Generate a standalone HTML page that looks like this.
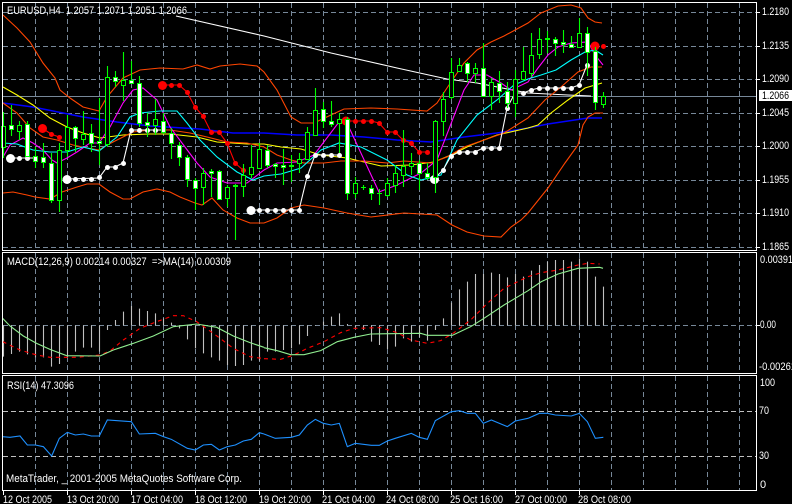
<!DOCTYPE html>
<html><head><meta charset="utf-8">
<style>
html,body{margin:0;padding:0;background:#000;width:792px;height:504px;overflow:hidden}
svg{display:block}
text{font-family:"Liberation Sans",sans-serif;font-size:11px;fill:#fff;white-space:pre}
polyline,.n{fill:none;vector-effect:non-scaling-stroke;shape-rendering:auto;stroke-width:1.1}
.b{stroke-width:1.5}
.w{shape-rendering:auto;stroke-width:1.1}
.g{fill:none;stroke:#778899;stroke-dasharray:5 3}
.s{fill:none;stroke:#c0c0c0;stroke-dasharray:5 3}
</style></head><body>
<svg width="792" height="504" viewBox="0 0 792 504" xmlns="http://www.w3.org/2000/svg" shape-rendering="crispEdges">
<rect width="792" height="504" fill="#000"/>
<!-- grid main -->
<path class="g" d="M3 12.5H756M3 46.5H756M3 79.5H756M3 113.5H756M3 146.5H756M3 180.5H756M3 213.5H756M3 247.5H756"/>
<path class="g" d="M35.5 3V250M67.5 3V250M99.5 3V250M131.5 3V250M163.5 3V250M195.5 3V250M227.5 3V250M259.5 3V250M291.5 3V250M323.5 3V250M355.5 3V250M387.5 3V250M419.5 3V250M451.5 3V250M483.5 3V250M515.5 3V250M547.5 3V250M579.5 3V250M611.5 3V250M643.5 3V250M675.5 3V250M707.5 3V250M739.5 3V250"/>
<!-- current price -->
<path d="M3 96.5H756" stroke="#778899" fill="none"/>
<!-- MAs -->
<polyline stroke="#fff" points="176,16 264,36 331,53 397,68 447,79 477,83 528,93 568,95 591,96"/>
<polyline class="b" stroke="#0000ff" points="3,103 33,107 83,117 117,122 150,126 200,129 233,133 264,133 297,135 331,135 364,137 397,140 431,142 464,137 497,133 528,128 548,124 568,121 588,118 602,118"/>
<polyline stroke="#ffff00" points="3,87 17,95 33,105 50,118 67,127 83,133 100,138 123,135 150,134 170,134 197,137 217,142 247,144 264,144 281,147 301,149 321,155 347,158 381,166 411,165 434,162 451,155 471,145 497,135 528,128 538,125 551,113 568,100 585,88 602,83"/>
<polyline stroke="#ff4500" points="3,15 17,28 30,42 43,63 55,78 60,90 70,98 83,107 99,111 107,97 123,78 140,70 160,68 183,69 197,65 210,69 220,66 240,64 257,66 264,72 277,90 291,117 301,123 314,123 331,115 344,109 371,108 397,109 427,111 437,103 451,82 464,63 477,50 491,42 504,36 528,23 541,13 558,6 571,5 581,8 588,18 595,22 602,23"/>
<polyline stroke="#ff4500" points="3,193 13,192 27,195 35,197 50,199 62,192 77,187 87,184 99,184 110,192 123,199 130,199 143,192 157,189 170,192 180,197 195,203 202,205 212,198 223,210 237,218 250,223 264,223 277,218 291,208 304,205 324,208 347,213 371,217 404,213 437,215 452,225 467,232 484,236 501,237 511,227 521,220 528,213 548,188 565,163 578,145 583,125 588,117 595,113 603,113"/>
<polyline stroke="#ff4500" points="3,103 17,113 30,128 43,137 57,140 73,145 87,148 99,150 107,145 123,137 133,132 150,130 170,130 190,133 207,137 227,142 247,143 264,147 277,155 291,160 304,163 324,163 341,161 364,161 387,163 404,161 431,163 447,157 464,147 484,140 504,133 528,118 545,100 561,87 578,72 591,67 602,67"/>
<polyline stroke="#ff00ff" points="3,157 10,145 23,138 33,143 43,150 52,160 57,163 67,158 77,152 90,143 99,143 110,127 123,103 133,90 143,88 157,100 170,127 185,147 197,163 210,177 227,183 247,183 264,170 277,163 297,162 314,155 339,122 347,123 379,192 397,185 421,173 437,160 464,90 474,75 487,75 501,83 511,90 528,82 538,68 548,55 558,47 571,43 588,42 595,55 603,65"/>
<polyline stroke="#00ffff" points="3,143 17,144 33,150 50,152 67,152 83,147 99,151 117,137 130,117 140,113 160,111 177,111 187,123 200,140 217,157 237,172 253,180 264,176 281,174 301,168 321,150 339,143 361,147 387,160 407,175 421,180 441,175 457,140 477,115 497,100 514,85 528,79 541,75 556,70 571,60 585,52 595,50 603,55"/>
<!-- red dots -->
<polyline stroke="#ff0000" points="162,85 179,85 187,92 195,107 203,116 211,132 219,132 227,143 235,163 243,170"/>
<polyline stroke="#ff0000" points="42,128 51,134 59,137"/>
<polyline stroke="#ff0000" points="346,121 371,121 379,123 387,132 395,132 403,140 411,143 419,152 427,152"/>
<g fill="#ff0000" shape-rendering="auto">
<circle cx="42.5" cy="128.5" r="4.5"/><circle cx="51.5" cy="134.5" r="2.5"/><circle cx="59.5" cy="137.5" r="2.5"/>
<circle cx="162.5" cy="85.5" r="4.5"/><circle cx="171.5" cy="85.5" r="2.5"/><circle cx="179.5" cy="85.5" r="2.5"/><circle cx="187.5" cy="92.5" r="2.5"/><circle cx="195.5" cy="107.5" r="2.5"/><circle cx="203.5" cy="116.5" r="2.5"/><circle cx="211.5" cy="132.5" r="2.5"/><circle cx="219.5" cy="132.5" r="2.5"/><circle cx="227.5" cy="143.5" r="2.5"/><circle cx="235.5" cy="163.5" r="2.5"/><circle cx="243.5" cy="170.5" r="2.5"/>
<circle cx="346" cy="121" r="4.5"/><circle cx="355.5" cy="121.5" r="2.5"/><circle cx="363.5" cy="121.5" r="2.5"/><circle cx="371.5" cy="121.5" r="2.5"/><circle cx="379.5" cy="123.5" r="2.5"/><circle cx="387.5" cy="132.5" r="2.5"/><circle cx="395.5" cy="132.5" r="2.5"/><circle cx="403.5" cy="140.5" r="2.5"/><circle cx="411.5" cy="143.5" r="2.5"/><circle cx="419.5" cy="152.5" r="2.5"/><circle cx="427.5" cy="152.5" r="2.5"/>
<circle cx="595" cy="46" r="4.5"/><circle cx="603.5" cy="46.5" r="2.5"/>
</g>
<!-- white dots -->
<polyline stroke="#fff" points="10,158 35,158"/>
<polyline stroke="#fff" points="67,179 99,178 107,167 115,167 123,163 131,130 163,130"/>
<polyline stroke="#fff" points="251,210 299,210 307,177 315,155 339,155"/>
<polyline stroke="#fff" points="434,179 443,170 451,156 459,152 475,152 483,148 499,148 507,108 515,93 523,93 531,90 539,88 571,88 579,85 587,65"/>
<g fill="#fff" shape-rendering="auto">
<circle cx="10.5" cy="158.5" r="4.5"/><circle cx="19.5" cy="158.5" r="2.5"/><circle cx="27.5" cy="158.5" r="2.5"/><circle cx="35.5" cy="158.5" r="2.5"/>
<circle cx="67" cy="179.5" r="4.5"/><circle cx="75.5" cy="179.5" r="2.5"/><circle cx="83.5" cy="179.5" r="2.5"/><circle cx="91.5" cy="179.5" r="2.5"/><circle cx="99.5" cy="177.5" r="2.5"/><circle cx="107.5" cy="167.5" r="2.5"/><circle cx="115.5" cy="167.5" r="2.5"/><circle cx="123.5" cy="163.5" r="2.5"/><circle cx="131.5" cy="130.5" r="2.5"/><circle cx="139.5" cy="130.5" r="2.5"/><circle cx="147.5" cy="130.5" r="2.5"/><circle cx="155.5" cy="130.5" r="2.5"/><circle cx="163.5" cy="130.5" r="2.5"/>
<circle cx="251" cy="210.5" r="4.5"/><circle cx="259.5" cy="210.5" r="2.5"/><circle cx="267.5" cy="210.5" r="2.5"/><circle cx="275.5" cy="210.5" r="2.5"/><circle cx="283.5" cy="210.5" r="2.5"/><circle cx="291.5" cy="210.5" r="2.5"/><circle cx="299.5" cy="210.5" r="2.5"/><circle cx="307.5" cy="176.5" r="2.5"/><circle cx="315.5" cy="155.5" r="2.5"/><circle cx="323.5" cy="155.5" r="2.5"/><circle cx="331.5" cy="155.5" r="2.5"/><circle cx="339.5" cy="155.5" r="2.5"/>
<circle cx="434.5" cy="179.5" r="4.5"/><circle cx="443.5" cy="170.5" r="2.5"/><circle cx="451.5" cy="156.5" r="2.5"/><circle cx="459.5" cy="152.5" r="2.5"/><circle cx="467.5" cy="152.5" r="2.5"/><circle cx="475.5" cy="152.5" r="2.5"/><circle cx="483.5" cy="148.5" r="2.5"/><circle cx="491.5" cy="148.5" r="2.5"/><circle cx="499.5" cy="148.5" r="2.5"/><circle cx="507.5" cy="108.5" r="2.5"/><circle cx="515.5" cy="93.5" r="2.5"/><circle cx="523.5" cy="93.5" r="2.5"/><circle cx="531.5" cy="90.5" r="2.5"/><circle cx="539.5" cy="88.5" r="2.5"/><circle cx="547.5" cy="88.5" r="2.5"/><circle cx="555.5" cy="88.5" r="2.5"/><circle cx="563.5" cy="88.5" r="2.5"/><circle cx="571.5" cy="88.5" r="2.5"/><circle cx="579.5" cy="85.5" r="2.5"/><circle cx="587.5" cy="65.5" r="2.5"/>
</g>
<!-- candle wicks -->
<path class="w" fill="none" stroke="#00ff00" d="M3.5 112V158M11.5 105V136M19.5 121V140M27.5 121V157M35.5 147V168M43.5 143V168M51.5 153V203M59.5 143V212M67.5 115V157M75.5 126V152M83.5 111V145M91.5 124V152M99.5 98V165M107.5 66V147M115.5 71V87M123.5 52V101M131.5 61V83M139.5 76V127M147.5 113V137M155.5 99V135M163.5 113V134M171.5 128V159M179.5 142V166M187.5 155V187M195.5 178V210M203.5 168V205M211.5 169V197M219.5 170V200M227.5 185V207M235.5 184V240M243.5 164V197M251.5 145V178M259.5 143V168M267.5 145V168M275.5 163V178M283.5 149V185M291.5 155V182M299.5 153V173M307.5 127V160M315.5 88V135M323.5 102V128M331.5 101V127M339.5 113V153M347.5 117V200M355.5 177V198M363.5 185V190M371.5 185V200M379.5 189V205M387.5 178V197M395.5 165V193M403.5 130V187M411.5 153V175M419.5 160V190M427.5 163V180M435.5 120V193M443.5 92V136M451.5 58V99M459.5 58V72M467.5 62V82M475.5 63V83M483.5 43V97M491.5 78V110M499.5 71V103M507.5 82V108M515.5 70V117M523.5 47V80M531.5 33V77M539.5 28V59M547.5 31V53M555.5 37V56M563.5 30V53M571.5 36V48M579.5 18V48M587.5 27V76M595.5 47V110M603.5 92V108"/>
<path fill="none" stroke="#00ff00" d="M361 187.5H366M377 193.5H382"/>
<!-- up candles (hollow) -->
<path fill="#000" stroke="#00ff00" d="M1.5 126.5h4v21h-4zM17.5 125.5h4v6h-4zM57.5 150.5h4v50h-4zM65.5 127.5h4v23h-4zM81.5 134.5h4v5h-4zM105.5 77.5h4v67h-4zM121.5 80.5h4v5h-4zM153.5 119.5h4v6h-4zM201.5 173.5h4v14h-4zM225.5 187.5h4v11h-4zM241.5 175.5h4v11h-4zM249.5 167.5h4v7h-4zM257.5 149.5h4v19h-4zM297.5 159.5h4v4h-4zM305.5 132.5h4v27h-4zM313.5 110.5h4v25h-4zM337.5 119.5h4v4h-4zM353.5 183.5h4v10h-4zM385.5 183.5h4v12h-4zM393.5 173.5h4v12h-4zM401.5 166.5h4v9h-4zM409.5 163.5h4v3h-4zM433.5 121.5h4v56h-4zM441.5 99.5h4v22h-4zM449.5 72.5h4v25h-4zM457.5 65.5h4v6h-4zM473.5 68.5h4v5h-4zM489.5 82.5h4v14h-4zM513.5 79.5h4v24h-4zM521.5 71.5h4v8h-4zM529.5 55.5h4v18h-4zM537.5 39.5h4v15h-4zM577.5 33.5h4v14h-4zM601.5 96.5h4v8h-4z"/>
<!-- down candles (filled) -->
<path fill="#fff" stroke="#00ff00" d="M9.5 125.5h4v4h-4zM25.5 124.5h4v32h-4zM33.5 156.5h4v5h-4zM41.5 157.5h4v5h-4zM49.5 163.5h4v37h-4zM73.5 127.5h4v11h-4zM89.5 133.5h4v10h-4zM97.5 141.5h4v2h-4zM113.5 77.5h4v4h-4zM129.5 80.5h4v3h-4zM137.5 83.5h4v40h-4zM145.5 122.5h4v3h-4zM161.5 121.5h4v11h-4zM169.5 133.5h4v10h-4zM177.5 145.5h4v12h-4zM185.5 157.5h4v22h-4zM193.5 180.5h4v8h-4zM209.5 171.5h4v2h-4zM217.5 171.5h4v28h-4zM233.5 185.5h4v1h-4zM265.5 150.5h4v15h-4zM273.5 164.5h4v2h-4zM281.5 165.5h4v2h-4zM289.5 165.5h4v1h-4zM321.5 109.5h4v12h-4zM329.5 121.5h4v3h-4zM345.5 119.5h4v74h-4zM369.5 188.5h4v5h-4zM417.5 163.5h4v10h-4zM425.5 173.5h4v4h-4zM465.5 63.5h4v10h-4zM481.5 68.5h4v28h-4zM497.5 83.5h4v8h-4zM505.5 91.5h4v12h-4zM545.5 38.5h4v1h-4zM553.5 39.5h4v4h-4zM561.5 42.5h4v2h-4zM569.5 44.5h4v3h-4zM585.5 33.5h4v19h-4zM593.5 51.5h4v51h-4z"/>
<rect x="759" y="90" width="33" height="11" fill="#fff"/>
<!-- MACD -->
<path class="g" d="M3 325.5H756"/>
<path class="g" d="M35.5 253V373M67.5 253V373M99.5 253V373M131.5 253V373M163.5 253V373M195.5 253V373M227.5 253V373M259.5 253V373M291.5 253V373M323.5 253V373M355.5 253V373M387.5 253V373M419.5 253V373M451.5 253V373M483.5 253V373M515.5 253V373M547.5 253V373M579.5 253V373M611.5 253V373M643.5 253V373M675.5 253V373M707.5 253V373M739.5 253V373"/>
<g transform="translate(0,250) scale(1,.33333)"><path class="n" stroke="#c0c0c0" d="M3.5 226V320M11.5 226V312M19.5 226V305M27.5 226V313M35.5 226V322M43.5 226V322M51.5 226V350M59.5 226V342M67.5 226V322M75.5 226V305M83.5 226V293M91.5 226V293M99.5 226V305M107.5 226V240M115.5 226V210M123.5 226V185M131.5 226V168M139.5 226V176M147.5 226V183M155.5 226V190M163.5 226V205M171.5 226V218M179.5 226V235M187.5 226V268M195.5 226V295M203.5 226V310M211.5 226V322M219.5 226V332M227.5 226V345M235.5 226V348M243.5 226V345M251.5 226V332M259.5 226V332M267.5 226V305M275.5 226V305M283.5 226V300M291.5 226V295M299.5 226V283M307.5 226V258M315.5 226V228M323.5 226V215M331.5 226V200M339.5 226V190M347.5 226V222M355.5 226V232M363.5 226V240M371.5 226V275M379.5 226V285M387.5 226V297M395.5 226V290M403.5 226V265M411.5 226V275M419.5 226V262M427.5 226V272M435.5 226V240M443.5 226V205M451.5 226V158M459.5 226V118M467.5 226V95M475.5 226V72M483.5 226V72M491.5 226V68M499.5 226V72M507.5 226V82M515.5 226V72M523.5 226V80M531.5 226V62M539.5 226V45M547.5 226V35M555.5 226V30M563.5 226V30M571.5 226V35M579.5 226V25M587.5 226V35M595.5 226V80M603.5 226V110"/></g>
<g transform="translate(0,250) scale(.33333)">
<polyline stroke="#ff0000" stroke-dasharray="4 4" points="8,275 60,300 110,315 150,322 230,322 300,315 330,303 370,270 420,235 470,215 520,197 550,197 590,215 640,250 700,295 750,320 792,326"/>
<polyline stroke="#90ee90" points="8,205 30,228 70,258 110,280 150,298 200,317 300,318 340,300 400,280 460,258 520,230 590,222 650,232 700,258 750,278 792,292"/>
</g>
<g transform="translate(264,250) scale(.33333)">
<polyline stroke="#ff0000" stroke-dasharray="4 4" points="0,326 50,328 90,315 130,295 180,275 230,248 270,235 350,233 400,248 440,270 490,280 530,272 570,248 620,210 670,160 720,115 792,80"/>
<polyline stroke="#90ee90" points="0,293 40,302 80,314 120,314 170,302 220,275 270,262 320,252 470,250 490,256 565,256 620,230 660,205 720,165 792,122"/>
</g>
<g transform="translate(528,250) scale(.33333)">
<polyline stroke="#ff0000" stroke-dasharray="4 4" points="0,80 40,68 90,60 150,45 180,40 215,42"/>
<polyline stroke="#90ee90" points="0,122 40,95 90,72 150,55 215,52 225,55"/>
</g>
<!-- RSI -->
<path class="s" d="M3 411.5H756M3 456.5H756"/>
<path class="g" d="M35.5 376V490M67.5 376V490M99.5 376V490M131.5 376V490M163.5 376V490M195.5 376V490M227.5 376V490M259.5 376V490M291.5 376V490M323.5 376V490M355.5 376V490M387.5 376V490M419.5 376V490M451.5 376V490M483.5 376V490M515.5 376V490M547.5 376V490M579.5 376V490M611.5 376V490M643.5 376V490M675.5 376V490M707.5 376V490M739.5 376V490"/>
<g transform="translate(0,250) scale(.33333)"><polyline stroke="#1e90ff" points="8,560 30,562 60,558 82,585 106,585 130,590 155,618 178,565 202,547 226,555 250,552 274,558 298,558 322,510 394,515 418,552 466,550 490,560 514,568 562,595 586,600 610,585 634,583 658,600 682,590 706,585 730,573 754,568 778,548 792,552"/></g>
<g transform="translate(264,250) scale(.33333)"><polyline stroke="#1e90ff" points="0,552 34,565 82,562 106,555 130,525 154,508 178,520 202,525 226,520 250,590 274,580 322,586 346,586 370,573 394,565 442,550 466,562 490,568 514,512 562,485 586,482 610,490 634,490 658,520 682,510 730,530 754,513 792,505"/></g>
<g transform="translate(528,250) scale(.33333)"><polyline stroke="#1e90ff" points="0,505 34,490 58,490 82,495 130,498 154,490 178,515 202,565 226,562"/></g>
<!-- frames -->
<path fill="none" stroke="#fff" d="M2.5 2.5H756.5V250.5H2.5ZM2.5 252.5H756.5V373.5H2.5ZM2.5 375.5H756.5V490.5H2.5Z"/>
<path fill="none" stroke="#fff" d="M757 12.5h3M757 46.5h3M757 79.5h3M757 113.5h3M757 146.5h3M757 180.5h3M757 213.5h3M757 247.5h3M757 325.5h3M3.5 491V495M67.5 491V495M131.5 491V495M195.5 491V495M259.5 491V495M323.5 491V495M387.5 491V495M451.5 491V495M515.5 491V495M579.5 491V495"/>
<!-- text -->
<text lengthAdjust="spacingAndGlyphs" x="7" y="14" textLength="180">EURUSD,H4  1.2057 1.2071 1.2051 1.2066</text>
<text lengthAdjust="spacingAndGlyphs" x="7" y="265" textLength="224">MACD(12,26,9) 0.00214 0.00327  =&gt;MA(14) 0.00309</text>
<text lengthAdjust="spacingAndGlyphs" x="7" y="389" textLength="67">RSI(14) 47.3096</text>
<text lengthAdjust="spacingAndGlyphs" x="6" y="482" textLength="236">MetaTrader, _ 2001-2005 MetaQuotes Software Corp.</text>
<text lengthAdjust="spacingAndGlyphs" x="762" y="15" textLength="27">1.2180</text>
<text lengthAdjust="spacingAndGlyphs" x="762" y="49" textLength="27">1.2135</text>
<text lengthAdjust="spacingAndGlyphs" x="762" y="82" textLength="27">1.2090</text>
<text lengthAdjust="spacingAndGlyphs" x="762" y="99" textLength="27" style="fill:#000">1.2066</text>
<text lengthAdjust="spacingAndGlyphs" x="762" y="116" textLength="27">1.2045</text>
<text lengthAdjust="spacingAndGlyphs" x="762" y="149" textLength="27">1.2000</text>
<text lengthAdjust="spacingAndGlyphs" x="762" y="183" textLength="27">1.1955</text>
<text lengthAdjust="spacingAndGlyphs" x="762" y="216" textLength="27">1.1910</text>
<text lengthAdjust="spacingAndGlyphs" x="762" y="250" textLength="27">1.1865</text>
<text lengthAdjust="spacingAndGlyphs" x="760" y="263" textLength="33">0.00391</text>
<text lengthAdjust="spacingAndGlyphs" x="760" y="328" textLength="16">0.00</text>
<text lengthAdjust="spacingAndGlyphs" x="759" y="370" textLength="37">-0.00261</text>
<text lengthAdjust="spacingAndGlyphs" x="760" y="386" textLength="15">100</text>
<text lengthAdjust="spacingAndGlyphs" x="759" y="414" textLength="10">70</text>
<text lengthAdjust="spacingAndGlyphs" x="759" y="459" textLength="10">30</text>
<text x="760" y="488">0</text>
<text lengthAdjust="spacingAndGlyphs" x="3" y="503" textLength="49">12 Oct 2005</text>
<text lengthAdjust="spacingAndGlyphs" x="67" y="503" textLength="52">13 Oct 20:00</text>
<text lengthAdjust="spacingAndGlyphs" x="131" y="503" textLength="52">17 Oct 04:00</text>
<text lengthAdjust="spacingAndGlyphs" x="195" y="503" textLength="52">18 Oct 12:00</text>
<text lengthAdjust="spacingAndGlyphs" x="259" y="503" textLength="52">19 Oct 20:00</text>
<text lengthAdjust="spacingAndGlyphs" x="322" y="503" textLength="53">21 Oct 04:00</text>
<text lengthAdjust="spacingAndGlyphs" x="386" y="503" textLength="53">24 Oct 08:00</text>
<text lengthAdjust="spacingAndGlyphs" x="450" y="503" textLength="53">25 Oct 16:00</text>
<text lengthAdjust="spacingAndGlyphs" x="515" y="503" textLength="52">27 Oct 00:00</text>
<text lengthAdjust="spacingAndGlyphs" x="578" y="503" textLength="53">28 Oct 08:00</text>
</svg>
</body></html>
